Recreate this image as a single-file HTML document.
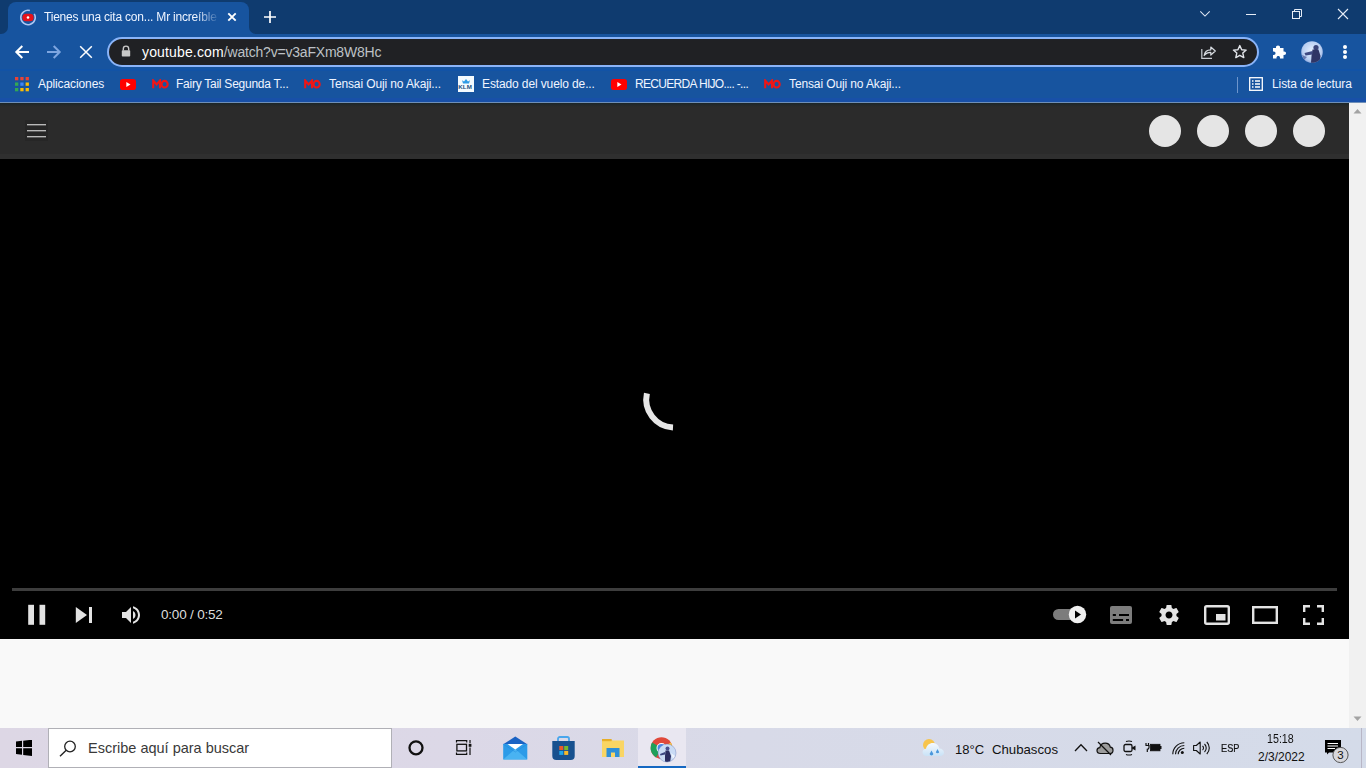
<!DOCTYPE html>
<html><head><meta charset="utf-8">
<style>
*{margin:0;padding:0;box-sizing:border-box}
html,body{width:1366px;height:768px;overflow:hidden;background:#f9f9f9;font-family:"Liberation Sans",sans-serif}
.abs{position:absolute}
#tabstrip{left:0;top:0;width:1366px;height:34px;background:#0f3b6f}
#tab{left:8px;top:2px;width:241px;height:32px;background:#17549f;border-radius:8px 8px 0 0}
#toolbar{left:0;top:34px;width:1366px;height:34px;background:#17549f}
#omni{left:107px;top:37px;width:1152px;height:30px;background:#202124;border:2px solid #8ab4f8;border-radius:15px}
#bookmarks{left:0;top:68px;width:1366px;height:34px;background:#17549f}
#bmline{left:0;top:102px;width:1366px;height:1px;background:#6f8fb8}
#ythead{left:0;top:103px;width:1349px;height:56px;background:#2b2b2b}
#video{left:0;top:159px;width:1349px;height:480px;background:#000}
#below{left:0;top:639px;width:1349px;height:89px;background:#f9f9f9}
#scroll{left:1349px;top:103px;width:17px;height:625px;background:#f1f1f1}
#taskbar{left:0;top:728px;width:1366px;height:40px;background:linear-gradient(to right,#ddd7e5 0,#dcd8e7 450px,#d8dae8 750px,#d4dbe9 1366px)}
.bm{top:76px;font-size:12px;line-height:16px;color:#f0f5ff;white-space:nowrap}
.circ{top:115px;width:32px;height:32px;border-radius:50%;background:#e5e5e5}
</style></head><body>
<div id="tabstrip" class="abs"></div>
<div class="abs" style="left:0;top:24px;width:258px;height:10px;background:#17549f"></div><div class="abs" style="left:0;top:0;width:8px;height:34px;background:#0f3b6f;border-bottom-right-radius:7px"></div><div class="abs" style="left:249px;top:0;width:9px;height:34px;background:#0f3b6f;border-bottom-left-radius:7px"></div><div id="tab" class="abs"></div>
<div id="toolbar" class="abs"></div>
<div id="omni" class="abs"></div>
<div id="bookmarks" class="abs"></div>
<div id="bmline" class="abs"></div><div class="abs" style="left:0;top:98px;width:1366px;height:4px;background:#1850a8"></div><div class="abs" style="left:0;top:69px;width:1366px;height:2px;background:#1253a6"></div>
<!-- tab -->
<svg class="abs" style="left:19px;top:9px" width="18" height="17" viewBox="0 0 18 17">
 <path d="M15.24 4.9 A7.2 7.2 0 1 1 10.86 1.55" fill="none" stroke="#aec6f2" stroke-width="1.6"/>
 <rect x="3.4" y="4.7" width="11.2" height="7.6" rx="3.6" fill="#e8101a"/>
 <circle cx="9" cy="8.5" r="1.3" fill="#fff"/>
</svg>
<div class="abs" style="left:44px;top:9px;width:180px;height:16px;overflow:hidden;font-size:12px;color:#eef4ff;white-space:nowrap;line-height:16px;letter-spacing:-0.2px;-webkit-mask-image:linear-gradient(to right,#000 152px,transparent 176px)">Tienes una cita con... Mr increíble</div>
<svg class="abs" style="left:226px;top:11px" width="12" height="12" viewBox="0 0 12 12"><path d="M2.3 2.3L9.7 9.7M9.7 2.3L2.3 9.7" stroke="#fff" stroke-width="1.9"/></svg>
<svg class="abs" style="left:263px;top:10px" width="14" height="14" viewBox="0 0 14 14"><path d="M7 1V13M1 7H13" stroke="#fff" stroke-width="1.7"/></svg>
<!-- window controls -->
<svg class="abs" style="left:1198px;top:9px" width="14" height="10" viewBox="0 0 14 10"><path d="M2.3 2.3L7 7L11.7 2.3" fill="none" stroke="#dfe8f5" stroke-width="1.05"/></svg>
<div class="abs" style="left:1246px;top:14px;width:10px;height:1px;background:#e6edf7"></div>
<svg class="abs" style="left:1290px;top:8px" width="13" height="13" viewBox="0 0 13 13"><path d="M4.5 3.5V1.5H11.5V8.5H9.5" fill="none" stroke="#e6edf7" stroke-width="1"/><rect x="2.5" y="3.5" width="7" height="7" fill="none" stroke="#e6edf7" stroke-width="1"/></svg>
<svg class="abs" style="left:1336px;top:8px" width="13" height="13" viewBox="0 0 13 13"><path d="M2 1L12 11M12 1L2 11" stroke="#e6edf7" stroke-width="1.1"/></svg>
<!-- toolbar -->
<svg class="abs" style="left:14px;top:44px" width="16" height="16" viewBox="0 0 16 16"><path d="M15 8H2.5M8.3 2L2.3 8L8.3 14" fill="none" stroke="#fff" stroke-width="2"/></svg>
<svg class="abs" style="left:46px;top:44px" width="16" height="16" viewBox="0 0 16 16"><path d="M1 8H13.5M7.7 2L13.7 8L7.7 14" fill="none" stroke="#7ea6e0" stroke-width="2"/></svg>
<svg class="abs" style="left:79px;top:45px" width="14" height="14" viewBox="0 0 14 14"><path d="M1.2 1.2L12.8 12.8M12.8 1.2L1.2 12.8" fill="none" stroke="#fff" stroke-width="1.5"/></svg>
<svg class="abs" style="left:121px;top:45px" width="10" height="12" viewBox="0 0 10 12"><path d="M2.3 5.5V3.8A2.7 2.7 0 0 1 7.7 3.8V5.5" fill="none" stroke="#c8c8c8" stroke-width="1.4"/><rect x="0.8" y="5.2" width="8.4" height="6.4" rx="0.8" fill="#c8c8c8"/></svg>
<div class="abs" style="left:142px;top:44px;font-size:14px;line-height:17px;white-space:nowrap;letter-spacing:-0.2px;color:#bdc1c6"><span style="color:#fff;letter-spacing:0.15px">youtube.com</span>/watch?v=v3aFXm8W8Hc</div>
<svg class="abs" style="left:1200px;top:44px" width="17" height="16" viewBox="0 0 17 16"><path d="M1.8 5V14.3H12" fill="none" stroke="#c8ccd2" stroke-width="1.2"/><path d="M4.2 11.5C4.7 7.8 7.5 5.8 10.8 5.8V3L15.3 7L10.8 11V8.3C8 8.3 5.8 9.3 4.2 11.5Z" fill="none" stroke="#d8dce2" stroke-width="1.2" stroke-linejoin="round"/></svg>
<svg class="abs" style="left:1231px;top:43px" width="17" height="17" viewBox="0 0 17 17"><path d="M8.8 2.6L10.7 6.7L15.2 7.1L11.8 10.1L12.8 14.6L8.8 12.3L4.8 14.6L5.8 10.1L2.4 7.1L6.9 6.7Z" fill="none" stroke="#e2e5ea" stroke-width="1.4" stroke-linejoin="round"/></svg>
<svg class="abs" style="left:1272px;top:44px" width="16" height="16" viewBox="0 0 16 16"><path d="M6 1.5C7.4 1.5 8 2.3 8 3.3V4H11.5V7.5H12.2C13.4 7.5 14 8.3 14 9.3C14 10.3 13.4 11 12.2 11H11.5V14.5H8V13.7C8 12.6 7.3 12 6.3 12C5.3 12 4.5 12.6 4.5 13.7V14.5H1V11H1.7C2.9 11 3.5 10.3 3.5 9.3C3.5 8.3 2.9 7.5 1.7 7.5H1V4H4V3.3C4 2.3 4.6 1.5 6 1.5Z" fill="#fff"/></svg>
<svg class="abs" style="left:1301px;top:41px" width="22" height="22" viewBox="0 0 22 22"><defs><clipPath id="av"><circle cx="11" cy="11" r="10.8"/></clipPath><radialGradient id="avg" cx="0.5" cy="0.45" r="0.6"><stop offset="0" stop-color="#e6f0ff"/><stop offset="0.7" stop-color="#b9cff2"/><stop offset="1" stop-color="#7e9bd8"/></radialGradient></defs><g clip-path="url(#av)"><rect width="22" height="22" fill="url(#avg)"/><circle cx="15" cy="6.5" r="2.6" fill="#3a4478"/><path d="M11.5 8.5L17.5 8.5L19.5 15L18.5 22H10L10.5 15Z" fill="#2f3565"/><path d="M11.5 10L3.5 12L4.5 14.5L11.5 13.5Z" fill="#3e4a82"/><path d="M1 14L6 16L3 19Z" fill="#4a5a95" opacity="0.7"/></g></svg>
<div class="abs" style="left:1343px;top:45px;width:4px;height:4px;border-radius:50%;background:#fff"></div>
<div class="abs" style="left:1343px;top:50px;width:4px;height:4px;border-radius:50%;background:#fff"></div>
<div class="abs" style="left:1343px;top:55px;width:4px;height:4px;border-radius:50%;background:#fff"></div>
<!-- bookmarks -->
<svg class="abs" style="left:15px;top:77px" width="14" height="15" viewBox="0 0 14 15">
 <rect x="0" y="0" width="3.3" height="3.3" fill="#ea4335"/><rect x="5.3" y="0" width="3.3" height="3.3" fill="#ea4335"/><rect x="10.6" y="0" width="3.3" height="3.3" fill="#ea4335"/>
 <rect x="0" y="5.5" width="3.3" height="3.3" fill="#34a853"/><rect x="5.3" y="5.5" width="3.3" height="3.3" fill="#4285f4"/><rect x="10.6" y="5.5" width="3.3" height="3.3" fill="#fbbc04"/>
 <rect x="0" y="11" width="3.3" height="3.3" fill="#34a853"/><rect x="5.3" y="11" width="3.3" height="3.3" fill="#fbbc04"/><rect x="10.6" y="11" width="3.3" height="3.3" fill="#fbbc04"/>
</svg>
<div class="abs bm" style="left:38px;letter-spacing:-0.1px">Aplicaciones</div>
<svg class="abs" style="left:120px;top:79px" width="16" height="11" viewBox="0 0 16 11"><rect x="0" y="0" width="16" height="11" rx="2.8" fill="#f00"/><path d="M6.3 3L10.5 5.5L6.3 8Z" fill="#fff"/></svg>
<svg class="abs" style="left:152px;top:79px" width="17" height="10" viewBox="0 0 17 10"><path d="M1.2 9.2V1.5L4.6 5.5L8 1.5V9.2" fill="none" stroke="#f01515" stroke-width="2.1" stroke-linejoin="miter"/><ellipse cx="12.6" cy="5.2" rx="3.1" ry="3.3" fill="none" stroke="#f01515" stroke-width="2.1"/></svg>
<div class="abs bm" style="left:176px;letter-spacing:-0.25px">Fairy Tail Segunda T...</div>
<svg class="abs" style="left:304px;top:79px" width="17" height="10" viewBox="0 0 17 10"><path d="M1.2 9.2V1.5L4.6 5.5L8 1.5V9.2" fill="none" stroke="#f01515" stroke-width="2.1" stroke-linejoin="miter"/><ellipse cx="12.6" cy="5.2" rx="3.1" ry="3.3" fill="none" stroke="#f01515" stroke-width="2.1"/></svg>
<div class="abs bm" style="left:329px;letter-spacing:-0.12px">Tensai Ouji no Akaji...</div>
<svg class="abs" style="left:458px;top:76px" width="16" height="16" viewBox="0 0 16 16"><rect x="0" y="0" width="16" height="16" fill="#f4fbff"/><path d="M4 4.2L6 5.6L8 3L10 5.6L12 4.2L11 7.5H5Z" fill="#2e9be6"/><text x="0.3" y="12.6" font-family="Liberation Sans" font-weight="bold" font-size="6.2" fill="#22507e" letter-spacing="0.1">KLM</text></svg>
<div class="abs bm" style="left:482px;letter-spacing:-0.12px">Estado del vuelo de...</div>
<svg class="abs" style="left:611px;top:79px" width="16" height="11" viewBox="0 0 16 11"><rect x="0" y="0" width="16" height="11" rx="2.8" fill="#f00"/><path d="M6.3 3L10.5 5.5L6.3 8Z" fill="#fff"/></svg>
<div class="abs bm" style="left:635px;letter-spacing:-0.68px">RECUERDA HIJO.... -...</div>
<svg class="abs" style="left:764px;top:79px" width="17" height="10" viewBox="0 0 17 10"><path d="M1.2 9.2V1.5L4.6 5.5L8 1.5V9.2" fill="none" stroke="#f01515" stroke-width="2.1" stroke-linejoin="miter"/><ellipse cx="12.6" cy="5.2" rx="3.1" ry="3.3" fill="none" stroke="#f01515" stroke-width="2.1"/></svg>
<div class="abs bm" style="left:789px;letter-spacing:-0.12px">Tensai Ouji no Akaji...</div>
<div class="abs" style="left:1237px;top:77px;width:1px;height:16px;background:#6d95cc"></div>
<svg class="abs" style="left:1249px;top:77px" width="14" height="14" viewBox="0 0 14 14"><rect x="0.7" y="0.7" width="12.6" height="12.6" fill="none" stroke="#fff" stroke-width="1.3"/><path d="M3 4H4.5M3 7H4.5M3 10H4.5M6 4H11M6 7H11M6 10H11" stroke="#fff" stroke-width="1.3"/></svg>
<div class="abs bm" style="left:1272px;letter-spacing:-0.1px">Lista de lectura</div>

<div id="ythead" class="abs"></div>
<div id="video" class="abs"></div>
<div id="below" class="abs"></div>
<div id="scroll" class="abs"></div>
<div id="taskbar" class="abs"></div>
<!-- youtube header -->
<div class="abs" style="left:0;top:103px;width:1349px;height:4px;background:linear-gradient(#1c2628,#2b2b2b)"></div>
<div class="abs" style="left:0;top:154px;width:1349px;height:5px;background:#2f2f2f"></div>
<div class="abs" style="left:25px;top:120px;width:23px;height:21px;background:#262626"></div><div class="abs" style="left:27px;top:124px;width:19px;height:1px;background:#b8b8b8;box-shadow:0 1px 0 #5c5c5c"></div>
<div class="abs" style="left:27px;top:130px;width:19px;height:1px;background:#b8b8b8;box-shadow:0 1px 0 #5c5c5c"></div>
<div class="abs" style="left:27px;top:136px;width:19px;height:1px;background:#b8b8b8;box-shadow:0 1px 0 #5c5c5c"></div>
<div class="abs circ" style="left:1149px"></div>
<div class="abs circ" style="left:1197px"></div>
<div class="abs circ" style="left:1245px"></div>
<div class="abs circ" style="left:1293px"></div>
<!-- spinner -->
<svg class="abs" style="left:634px;top:358px" width="81" height="81" viewBox="0 0 81 81"><path d="M12.9 35.4 A28.2 28.2 0 0 0 39 69.5" fill="none" stroke="#e6e6e6" stroke-width="6"/></svg>
<!-- progress -->
<div class="abs" style="left:12px;top:588px;width:1325px;height:3px;background:#3d3d3d"></div>
<!-- controls -->
<svg class="abs" style="left:20px;top:600px" width="30" height="30" viewBox="0 0 30 30"><rect x="8.2" y="4.8" width="5.8" height="20" fill="#e3e3e3"/><rect x="19.5" y="4.8" width="5.7" height="20" fill="#e3e3e3"/></svg>
<svg class="abs" style="left:75px;top:606px" width="18" height="18" viewBox="0 0 18 18"><path d="M0.8 1L12 9L0.8 17Z" fill="#e3e3e3"/><rect x="14" y="1" width="3" height="16" fill="#e3e3e3"/></svg>
<svg class="abs" style="left:114px;top:597px" width="36" height="36" viewBox="0 0 36 36"><path fill="#e3e3e3" d="M8,21 L12,21 L17,26 L17,10 L12,15 L8,15 L8,21 Z M19,14 L19,22 C20.48,21.32 21.5,19.77 21.5,18 C21.5,16.26 20.48,14.74 19,14 Z M19,11.29 C21.89,12.15 24,14.83 24,18 C24,21.17 21.89,23.85 19,24.71 L19,26.77 C23.01,25.86 26,22.28 26,18 C26,13.72 23.01,10.14 19,9.23 L19,11.29 Z"/></svg>
<div class="abs" style="left:161px;top:607px;font-size:13.5px;line-height:15px;color:#ddd;white-space:nowrap;letter-spacing:-0.2px">0:00 / 0:52</div>
<div class="abs" style="left:1053px;top:609px;width:24px;height:11px;border-radius:6px;background:#7c7c7c"></div>
<svg class="abs" style="left:1068px;top:605px" width="19" height="19" viewBox="0 0 19 19"><circle cx="9.5" cy="9.5" r="8.7" fill="#f0f0f0"/><path d="M7 5.5L13 9.5L7 13.5Z" fill="#000"/></svg>
<svg class="abs" style="left:1110px;top:606px" width="22" height="18" viewBox="0 0 22 18"><rect x="0" y="0" width="22" height="18" rx="2" fill="#7d7d7d"/><path d="M2.8 8.9H5.9M9 8.9H19M2.8 14H13.1M16 14H19" stroke="#000" stroke-width="2"/></svg>
<svg class="abs" style="left:1157px;top:603px" width="24" height="24" viewBox="0 0 24 24"><path fill="#e3e3e3" d="M19.4 13c.04-.32.06-.66.06-1s-.02-.68-.06-1l2.1-1.65c.2-.15.25-.42.12-.64l-2-3.46c-.12-.22-.39-.3-.61-.22l-2.49 1c-.52-.4-1.08-.73-1.69-.98l-.38-2.65C14.46 2.18 14.25 2 14 2h-4c-.25 0-.46.18-.49.42l-.38 2.65c-.61.25-1.17.59-1.69.98l-2.49-1c-.23-.09-.49 0-.61.22l-2 3.46c-.13.22-.07.49.12.64L4.57 11c-.04.32-.07.65-.07 1s.03.68.07 1l-2.11 1.65c-.19.15-.24.42-.12.64l2 3.46c.12.22.39.3.61.22l2.49-1c.52.4 1.08.73 1.69.98l.38 2.65c.03.24.24.42.49.42h4c.25 0 .46-.18.49-.42l.38-2.65c.61-.25 1.17-.59 1.69-.98l2.49 1c.23.09.49 0 .61-.22l2-3.46c.12-.22.07-.49-.12-.64L19.4 13zM12 15.5c-1.93 0-3.5-1.57-3.5-3.5s1.57-3.5 3.5-3.5 3.5 1.57 3.5 3.5-1.57 3.5-3.5 3.5z"/></svg>
<svg class="abs" style="left:1204px;top:605px" width="26" height="20" viewBox="0 0 26 20"><rect x="1.2" y="1.2" width="23.6" height="17.6" rx="1.5" fill="none" stroke="#e3e3e3" stroke-width="2.4"/><rect x="12" y="9" width="9.5" height="6.5" fill="#e3e3e3"/></svg>
<svg class="abs" style="left:1252px;top:606px" width="26" height="18" viewBox="0 0 26 18"><rect x="1.2" y="1.2" width="23.6" height="15.6" fill="none" stroke="#e3e3e3" stroke-width="2.4"/></svg>
<svg class="abs" style="left:1303px;top:605px" width="21" height="20" viewBox="0 0 21 20"><path d="M1.2 7V1.2H7M14 1.2H19.8V7M19.8 13V18.8H14M7 18.8H1.2V13" fill="none" stroke="#e3e3e3" stroke-width="2.4"/></svg>
<!-- scrollbar arrows -->
<svg class="abs" style="left:1353px;top:108px" width="9" height="6" viewBox="0 0 9 6"><path d="M0.5 5.5L4.5 1L8.5 5.5Z" fill="#a3a3a3"/></svg>
<svg class="abs" style="left:1353px;top:716px" width="9" height="6" viewBox="0 0 9 6"><path d="M0.5 0.5L4.5 5L8.5 0.5Z" fill="#a3a3a3"/></svg>
<!-- taskbar -->
<svg class="abs" style="left:16px;top:740px" width="16" height="16" viewBox="0 0 16 16"><path d="M0 1.6L6 0.8V7H0ZM7.2 0.7L16 -0.3V7H7.2ZM0 8.2H6V14.7L0 13.9ZM7.2 8.2H16V16L7.2 14.9Z" fill="#000"/></svg>
<div class="abs" style="left:48px;top:728px;width:344px;height:40px;background:#fff;border:1px solid #b0b0b6"></div>
<svg class="abs" style="left:59px;top:740px" width="18" height="17" viewBox="0 0 18 17"><circle cx="11" cy="6.5" r="5.3" fill="none" stroke="#222" stroke-width="1.3"/><path d="M7.2 10.3L1 16.3" stroke="#222" stroke-width="1.4"/></svg>
<div class="abs" style="left:88px;top:740px;font-size:14.5px;line-height:17px;color:#393939;white-space:nowrap">Escribe aquí para buscar</div>
<svg class="abs" style="left:407px;top:739px" width="18" height="17" viewBox="0 0 18 17"><circle cx="9" cy="8.8" r="6.5" fill="none" stroke="#111" stroke-width="2.3"/></svg>
<svg class="abs" style="left:455px;top:739px" width="18" height="17" viewBox="0 0 18 17"><path d="M1.5 3.5V1.6H11.7V3.5M1.5 13.5V15.4H11.7V13.5" fill="none" stroke="#111" stroke-width="1.2"/><rect x="1.9" y="5.3" width="9.6" height="6.6" fill="none" stroke="#111" stroke-width="1.3"/><path d="M15 1V4.2M15 8.5V16" stroke="#111" stroke-width="1.2"/><rect x="13.7" y="4.9" width="2.7" height="2.9" fill="#111"/></svg>
<svg class="abs" style="left:503px;top:736px" width="25" height="24" viewBox="0 0 25 24"><path d="M0.2 8.2L12.3 0.6L24.3 8.2Z" fill="#1a63c4"/><rect x="0.2" y="8" width="24.1" height="15.4" fill="#2c9be8"/><path d="M0.2 23.4L12.3 13L24.3 23.4Z" fill="#49b3f2"/><path d="M4.5 8.1H20L12.3 13.4Z" fill="#fff"/><path d="M0.2 8L12.3 16L24.3 8" fill="none" stroke="#1c82d6" stroke-width="0.6" opacity="0.6"/></svg>
<svg class="abs" style="left:552px;top:736px" width="23" height="25" viewBox="0 0 23 25"><path d="M6 5.5V2.8A1.8 1.8 0 0 1 7.8 1H15.2A1.8 1.8 0 0 1 17 2.8V5.5" fill="none" stroke="#49a6ec" stroke-width="1.8"/><path d="M0.3 5H22.7V20A4 4 0 0 1 18.7 24H4.3A4 4 0 0 1 0.3 20Z" fill="#18518f"/><rect x="7.3" y="10" width="4" height="4" fill="#ea5a2a"/><rect x="12.2" y="10" width="4" height="4" fill="#79b92c"/><rect x="7.3" y="14.9" width="4" height="4" fill="#1ea7ea"/><rect x="12.2" y="14.9" width="4" height="4" fill="#f7b92a"/></svg>
<svg class="abs" style="left:602px;top:738px" width="22" height="20" viewBox="0 0 22 20"><path d="M0 1H9L10.5 2.8H0Z" fill="#e6a91f"/><rect x="0" y="2.5" width="22" height="16.5" fill="#f9d564"/><path d="M0 1.2H9.5V3.2H0Z" fill="#e8b02a"/><path d="M4.5 10H17.5V19H13V14.5H9V19H4.5Z" fill="#2e8fd8"/></svg>
<div class="abs" style="left:638px;top:728px;width:48px;height:40px;background:#e9e7f1"></div>
<div class="abs" style="left:638px;top:766px;width:48px;height:2px;background:#1568c2"></div>
<svg class="abs" style="left:650px;top:736px" width="27" height="27" viewBox="0 0 27 27"><defs><clipPath id="av2"><circle cx="17" cy="17" r="9"/></clipPath></defs><circle cx="11.5" cy="12" r="10.8" fill="#e0483a"/><path d="M11.5 12L2.1 6.6A10.8 10.8 0 0 0 6.1 21.4Z" fill="#1ea05a"/><path d="M11.5 12L20.9 6.6A10.8 10.8 0 0 1 11.5 22.8Z" fill="#fbc73e"/><circle cx="11.5" cy="12" r="5" fill="#fff"/><circle cx="11.5" cy="12" r="4" fill="#4a86e8"/><g clip-path="url(#av2)"><rect x="7" y="7" width="20" height="20" fill="#c9dbf5"/><circle cx="17.5" cy="12.5" r="2" fill="#4a4f90"/><path d="M15.5 14.5L19 14.5L21 20L20 27H15L15 20Z" fill="#2a2d62"/><path d="M15 16L10 18L10.5 19.5L15 18.5Z" fill="#3a4580"/><path d="M21 17L25 20L23 23Z" fill="#ffffff" opacity="0.7"/></g><circle cx="17" cy="17" r="9" fill="none" stroke="#5a6fb0" stroke-width="0.6" opacity="0.6"/></svg>
<svg class="abs" style="left:921px;top:737px" width="24" height="21" viewBox="0 0 24 21"><defs><linearGradient id="cg" x1="0" y1="0" x2="0" y2="1"><stop offset="0" stop-color="#f4f9fe"/><stop offset="1" stop-color="#c9e2f6"/></linearGradient></defs><circle cx="8" cy="8" r="6" fill="#f7c44c"/><path d="M5.5 19C3 19 1.5 17.3 1.5 15.3C1.5 13.2 3.2 11.8 5 11.8C5.6 8.3 8.4 6 11.8 6C15.3 6 18 8.5 18.4 11.6C20.9 11.7 23 13.4 23 15.5C23 17.7 21.3 19 19.2 19Z" fill="url(#cg)"/><path d="M10.5 13.5L8.6 17A2 2 0 0 0 12.4 17Z M16.5 12L14.8 15.2A1.9 1.9 0 0 0 18.2 15.2Z" fill="#4a97dc"/></svg>
<div class="abs" style="left:955px;top:742px;font-size:13px;line-height:15px;color:#111;white-space:nowrap">18°C</div>
<div class="abs" style="left:992px;top:742px;font-size:13.2px;line-height:15px;color:#111;white-space:nowrap">Chubascos</div>
<svg class="abs" style="left:1074px;top:743px" width="14" height="9" viewBox="0 0 14 9"><path d="M1 8L7 1.8L13 8" fill="none" stroke="#111" stroke-width="1.3"/></svg>
<svg class="abs" style="left:1096px;top:741px" width="18" height="15" viewBox="0 0 18 15"><path d="M4.5 12.5C2.3 12.5 1 11.3 1 9.6C1 8 2.2 6.8 3.8 6.7C4.3 4 6.5 2.2 9.2 2.2C11.8 2.2 13.8 3.8 14.3 6.2C16 6.3 17 7.6 17 9.2C17 11 15.8 12.5 13.8 12.5Z" fill="#9c9c9c" stroke="#111" stroke-width="1.2"/><path d="M2 1L15 14" stroke="#111" stroke-width="1.3"/></svg>
<svg class="abs" style="left:1123px;top:740px" width="13" height="16" viewBox="0 0 13 16"><path d="M3 1.6A8 8 0 0 1 9 1.6M3 14.4A8 8 0 0 0 9 14.4" fill="none" stroke="#111" stroke-width="1.1"/><rect x="1" y="4.5" width="8" height="7" rx="1.5" fill="none" stroke="#111" stroke-width="1.3"/><path d="M9 7.5L12.5 5.5V10.5L9 8.5Z" fill="#111"/></svg>
<svg class="abs" style="left:1145px;top:741px" width="17" height="12" viewBox="0 0 17 12"><path d="M1 2V4.5M3.5 2V4.5M0.5 4.5H4V6.5A1.8 1.8 0 0 1 2.3 8.3V11" fill="none" stroke="#111" stroke-width="1.2"/><rect x="5.5" y="3.3" width="9.5" height="6.5" fill="#111" stroke="#111" stroke-width="0.8"/><rect x="15" y="5" width="1.5" height="3" fill="#111"/></svg>
<svg class="abs" style="left:1172px;top:742px" width="13" height="13" viewBox="0 0 13 13"><path d="M0.8 12.3A11.5 11.5 0 0 1 12.3 0.8M3.5 12.3A8.8 8.8 0 0 1 12.3 3.5M6.2 12.3A6.1 6.1 0 0 1 12.3 6.2" fill="none" stroke="#111" stroke-width="1.1"/><circle cx="10.3" cy="10.5" r="1.5" fill="#111"/></svg>
<svg class="abs" style="left:1193px;top:741px" width="17" height="14" viewBox="0 0 17 14"><path d="M0.6 4.5H3.3L7.2 1V13L3.3 9.5H0.6Z" fill="none" stroke="#111" stroke-width="1.1" stroke-linejoin="round"/><path d="M9.5 5A2.5 2.5 0 0 1 9.5 9M11.5 3A5.5 5.5 0 0 1 11.5 11M13.8 1A8.5 8.5 0 0 1 13.8 13" fill="none" stroke="#111" stroke-width="1.1"/></svg>
<div class="abs" style="left:1221px;top:742px;font-size:11.5px;line-height:12px;color:#111;white-space:nowrap;transform:scaleX(0.8);transform-origin:0 0;-webkit-text-stroke:0.2px #111">ESP</div>
<div class="abs" style="left:1267px;top:733px;font-size:12px;line-height:12px;color:#111;white-space:nowrap;transform:scaleX(0.89);transform-origin:0 0">15:18</div>
<div class="abs" style="left:1258px;top:751px;font-size:12px;line-height:12px;color:#111;white-space:nowrap">2/3/2022</div>
<svg class="abs" style="left:1324px;top:739px" width="26" height="26" viewBox="0 0 26 26"><path d="M1 1H17V13.5H5L3 15.5V13.5H1Z" fill="#000"/><path d="M3.5 4.5H14M3.5 7H14M3.5 9.5H11" stroke="#fff" stroke-width="1"/><circle cx="16.5" cy="16" r="7.6" fill="#d7d7dc" stroke="#555" stroke-width="1"/><text x="13.3" y="20.3" font-family="Liberation Sans" font-size="11.5" fill="#111">3</text></svg>
<div class="abs" style="left:1361px;top:728px;width:1px;height:40px;background:#b8b6c6"></div>

</body></html>
